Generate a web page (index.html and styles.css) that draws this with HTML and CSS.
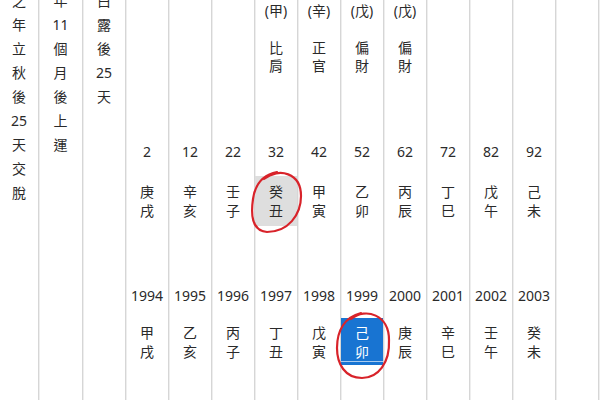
FILE: index.html
```html
<!DOCTYPE html>
<html lang="zh-Hant">
<head>
<meta charset="utf-8">
<title>大運</title>
<link rel="stylesheet" href="styles.css">
</head>
<body>
<div class="table">
  <div class="col col-a"><div class="note">之<br>年<br>立<br>秋<br>後<br>25<br>天<br>交<br>脫</div></div>
  <div class="col col-b"><div class="note">年<br>11<br>個<br>月<br>後<br>上<br>運</div></div>
  <div class="col"><div class="note">白<br>露<br>後<br>25<br>天</div></div>

  <div class="col"><div class="top"></div><div class="age">2</div><div class="gz">庚<br>戌</div><div class="year">1994</div><div class="gz gz2">甲<br>戌</div></div>
  <div class="col"><div class="top"></div><div class="age">12</div><div class="gz">辛<br>亥</div><div class="year">1995</div><div class="gz gz2">乙<br>亥</div></div>
  <div class="col"><div class="top"></div><div class="age">22</div><div class="gz">壬<br>子</div><div class="year">1996</div><div class="gz gz2">丙<br>子</div></div>
  <div class="col"><div class="top"><div class="stem">(甲)</div><div class="god">比<br>肩</div></div><div class="age">32</div><div class="gz gz-grey">癸<br>丑</div><div class="year">1997</div><div class="gz gz2">丁<br>丑</div></div>
  <div class="col"><div class="top"><div class="stem">(辛)</div><div class="god">正<br>官</div></div><div class="age">42</div><div class="gz">甲<br>寅</div><div class="year">1998</div><div class="gz gz2">戊<br>寅</div></div>
  <div class="col"><div class="top"><div class="stem">(戊)</div><div class="god">偏<br>財</div></div><div class="age">52</div><div class="gz">乙<br>卯</div><div class="year">1999</div><div class="gz gz2 gz-blue">己<br>卯</div></div>
  <div class="col"><div class="top"><div class="stem">(戊)</div><div class="god">偏<br>財</div></div><div class="age">62</div><div class="gz">丙<br>辰</div><div class="year">2000</div><div class="gz gz2">庚<br>辰</div></div>
  <div class="col"><div class="top"></div><div class="age">72</div><div class="gz">丁<br>巳</div><div class="year">2001</div><div class="gz gz2">辛<br>巳</div></div>
  <div class="col"><div class="top"></div><div class="age">82</div><div class="gz">戊<br>午</div><div class="year">2002</div><div class="gz gz2">壬<br>午</div></div>
  <div class="col"><div class="top"></div><div class="age">92</div><div class="gz">己<br>未</div><div class="year">2003</div><div class="gz gz2">癸<br>未</div></div>
  <div class="col"></div>
  <div class="col col-last"></div>
</div>
<svg class="marks" width="600" height="400" viewBox="0 0 600 400">
  <path d="M264 179 C 279 167, 301 173, 301 196 C 301 215, 288 232, 267 232 C 251 231, 251 213, 253 199 C 255 185, 262 175, 277 172" />
  <path d="M351 319 C 366 307, 389 315, 389 340 C 390 363, 378 378, 362 378 C 345 378, 337 364, 337 348 C 337 330, 345 317, 361 313" />
</svg>
</body>
</html>
```
FILE: styles.css
```css
html, body {
  margin: 0;
  padding: 0;
  background: #ffffff;
  overflow: hidden;
}
body {
  width: 600px;
  height: 400px;
  font-family: "Noto Sans", "Noto Sans CJK TC", sans-serif;
  font-size: 14px;
  color: #2a2a2a;
}
.table {
  display: grid;
  grid-template-columns: 39px 44px repeat(12, 43px) 1fr;
  height: 400px;
  overflow: hidden;
}
.col {
  border-right: 1px solid #d6d6d6;
  box-shadow: 1px 0 0 #eeeeee;
  text-align: center;
  height: 400px;
  box-sizing: border-box;
}
.col-last {
  border-right: none;
  box-shadow: none;
}
.note {
  margin-top: -11px;
  line-height: 24px;
}
.top {
  height: 134px;
  padding-top: 2px;
  box-sizing: border-box;
  line-height: 18px;
}
.god {
  margin-top: 19px;
}
.age {
  height: 36px;
  line-height: 36px;
}
.gz {
  margin-top: 6px;
  height: 50px;
  line-height: 19px;
  display: flex;
  align-items: center;
  justify-content: center;
}
.gz2 {
  margin-top: 4px;
  height: 47px;
}
.year {
  margin-top: 52px;
  height: 36px;
  line-height: 36px;
}
.gz-grey {
  background: #dedede;
}
.gz-blue {
  background: #1874d2;
  color: #ffffff;
  box-shadow: inset 0 -3px 0 #1874d2, inset 0 -4px 0 #a9cbef;
}
.marks {
  position: absolute;
  top: 0;
  left: 0;
  pointer-events: none;
}
.marks path {
  fill: none;
  stroke: #d8232a;
  stroke-width: 2.2;
  stroke-linecap: round;
}
```
